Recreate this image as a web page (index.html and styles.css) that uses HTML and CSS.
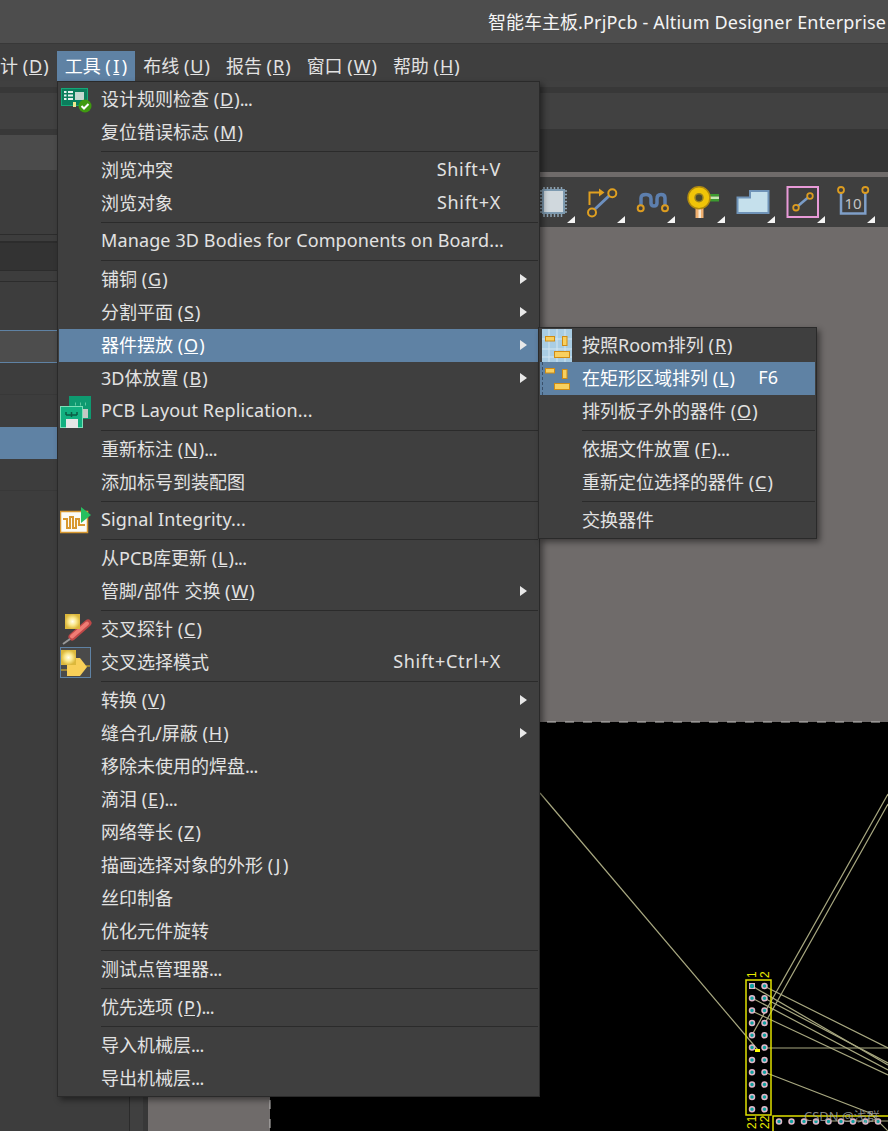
FILE: index.html
```html
<!DOCTYPE html>
<html lang="zh-CN">
<head>
  <meta charset="UTF-8">
  <title>智能车主板.PrjPcb - Altium Designer</title>
  <link rel="stylesheet" href="styles.css">
</head>
<body>
  <div class="app">
    <header class="titlebar">智能车主板<span class="lat-title">.PrjPcb - Altium Designer Enterprise</span></header>

    <nav class="menubar">
      <span class="menubar-item">设计 (<u>D</u>)</span>
      <span class="menubar-item active">工具 (<u class="wide">I</u>)</span>
      <span class="menubar-item">布线 (<u>U</u>)</span>
      <span class="menubar-item">报告 (<u>R</u>)</span>
      <span class="menubar-item">窗口 (<u>W</u>)</span>
      <span class="menubar-item">帮助 (<u>H</u>)</span>
    </nav>

    <!-- bandes sous le menu -->
    <div class="band band-a"></div>
    <div class="band band-b"></div>
    <div class="band band-c"></div>

    <div class="workspace">
      <aside class="panel">
        <div class="p-row p1"></div>
        <div class="p-row p2"></div>
        <div class="p-row p3"></div>
        <div class="p-row p4"></div>
        <div class="p-row p5"></div>
        <div class="p-row p6"></div>
        <div class="p-row p7"></div>
        <div class="p-row p8"></div>
        <div class="p-row p9"></div>
        <div class="p-row p10"></div>
        <div class="p-row p11"></div>
        <div class="p-row p12"></div>
      </aside>

      <main class="main">
        <div class="tabs"></div>
        <div class="gray-line"></div>
        <div class="toolbar">
          <div class="tool">
            <svg viewBox="0 0 36 36" width="36" height="36">
              <path d="M10 3v30M13.500 3v30M17 3v30M20.500 3v30M24 3v30M27.500 3v30M6 7h27M6 10.500h27M6 14h27M6 17.500h27M6 21h27M6 24.500h27M6 28h27" stroke="#8fa5b5" stroke-width="1.500" fill="none"/>
              <rect x="9" y="6" width="21" height="23" fill="#d0d8dd" stroke="#7d9ab0" stroke-width="2"/>
            </svg>
          </div>
          <div class="tool">
            <svg viewBox="0 0 36 36" width="36" height="36">
              <path d="M5.500 21V8.500H16" fill="none" stroke="#e0a020" stroke-width="2"/>
              <path d="M15 4.500l5.500 4-5.500 4z" fill="#e0a020"/>
              <path d="M10 26L26 11" stroke="#6d90c0" stroke-width="3"/>
              <circle cx="8" cy="28.500" r="4" fill="#3f3f3f" stroke="#e0a020" stroke-width="2"/>
              <circle cx="28.300" cy="9.300" r="4" fill="#3f3f3f" stroke="#e0a020" stroke-width="2"/>
            </svg>
          </div>
          <div class="tool">
            <svg viewBox="0 0 36 36" width="36" height="36">
              <path d="M7 21V14Q7 10.500 12 10.500Q17 10.500 17 15V19Q17 22 20 22Q23 22 23 19V15Q23 10.500 27 10.500Q31 10.500 31 14V21" fill="none" stroke="#5d7fae" stroke-width="3.500"/>
              <circle cx="6.700" cy="24.300" r="3" fill="#3f3f3f" stroke="#dc9c20" stroke-width="2"/>
              <circle cx="31" cy="24.300" r="3" fill="#3f3f3f" stroke="#dc9c20" stroke-width="2"/>
            </svg>
          </div>
          <div class="tool">
            <svg viewBox="0 0 36 36" width="36" height="36">
              <rect x="24" y="10" width="11" height="2.500" fill="#3c9a30"/>
              <rect x="24" y="12.500" width="11" height="2.500" fill="#c8e8b0"/>
              <rect x="24" y="15" width="11" height="2.500" fill="#3c9a30"/>
              <rect x="11.500" y="24" width="8" height="10" fill="#f0b070"/>
              <rect x="14.500" y="24" width="2.500" height="10" fill="#f6e6d0"/>
              <circle cx="15" cy="13.700" r="11" fill="#f0c408" stroke="#b08a10" stroke-width="1.500"/>
              <circle cx="15" cy="13.700" r="4" fill="#4a4a30" stroke="#9a8420" stroke-width="1.500"/>
            </svg>
          </div>
          <div class="tool">
            <svg viewBox="0 0 36 36" width="36" height="36">
              <path d="M3.500 13.500H16V7H34.500V29H3.500Z" fill="#c5e0ec" stroke="#6f93b8" stroke-width="2"/>
            </svg>
          </div>
          <div class="tool">
            <svg viewBox="0 0 36 36" width="36" height="36">
              <rect x="3.500" y="3" width="30.500" height="30" fill="none" stroke="#e89ad8" stroke-width="2"/>
              <path d="M14 22L24 13.500" stroke="#7a9cc8" stroke-width="2.500"/>
              <circle cx="12" cy="23.700" r="2.800" fill="#3f3f3f" stroke="#dc9c20" stroke-width="1.800"/>
              <circle cx="26" cy="12" r="2.800" fill="#3f3f3f" stroke="#dc9c20" stroke-width="1.800"/>
            </svg>
          </div>
          <div class="tool">
            <svg viewBox="0 0 36 36" width="36" height="36">
              <path d="M7 8V29.500H31.300V8" fill="none" stroke="#7f9fc8" stroke-width="2.500"/>
              <circle cx="7" cy="6" r="3" fill="#3f3f3f" stroke="#dc9c20" stroke-width="1.800"/>
              <circle cx="31.300" cy="6" r="3" fill="#3f3f3f" stroke="#dc9c20" stroke-width="1.800"/>
              <text x="19" y="25" class="dim-text">10</text>
            </svg>
          </div>
        </div>

        <div class="view">
          <div class="strip"></div>
          <svg class="pcb" viewBox="148 227 740 904" width="740" height="904">
            <rect x="148" y="227" width="740" height="904" fill="#6f6b6a"/>
            <rect x="270" y="722" width="618" height="409" fill="#000"/>
            <path d="M547 722H888" stroke="#c4c2c0" stroke-dasharray="9 9"/>
            <path d="M270 1100V1131" stroke="#c4c2c0" stroke-dasharray="9 10"/>
            <g class="nets">
              <path d="M540 793L758 1050"/>
              <path d="M752 1035L888 794"/>
              <path d="M765 1023L888 804"/>
              <path d="M752 986L888 1065"/>
              <path d="M764 986L888 1048"/>
              <path d="M752 998L888 1070"/>
              <path d="M764 998L888 1063"/>
              <path d="M752 1011L888 1075"/>
              <path d="M764 1048H888"/>
              <path d="M764 1072L870 1113L888 1131"/>
              <path d="M830 1121H888"/>
            </g>
            <rect x="746" y="980" width="25" height="135" class="outline"/>
            <path d="M773 1131V1116H888" class="outline"/>
            <rect x="755" y="1049" width="5" height="3" fill="#ff0"/>
            <g class="silk">
              <text transform="translate(756 978) rotate(-90)">1</text>
              <text transform="translate(769 978) rotate(-90)">2</text>
              <text transform="translate(756 1129) rotate(-90)">21</text>
              <text transform="translate(769 1129) rotate(-90)">22</text>
            </g>
            <rect x="749" y="983" width="6" height="6" fill="#e0b8c8"/>
            <circle cx="752" cy="986" r="2.200" class="hole"/>
            <g id="pads" class="pads">
              <circle cx="764.500" cy="986" r="2.500"/>
              <circle cx="752" cy="998.300" r="2.500"/><circle cx="764.500" cy="998.300" r="2.500"/>
              <circle cx="752" cy="1010.600" r="2.500"/><circle cx="764.500" cy="1010.600" r="2.500"/>
              <circle cx="752" cy="1023" r="2.500"/><circle cx="764.500" cy="1023" r="2.500"/>
              <circle cx="752" cy="1035.300" r="2.500"/><circle cx="764.500" cy="1035.300" r="2.500"/>
              <circle cx="752" cy="1047.600" r="2.500"/><circle cx="764.500" cy="1047.600" r="2.500"/>
              <circle cx="752" cy="1060" r="2.500"/><circle cx="764.500" cy="1060" r="2.500"/>
              <circle cx="752" cy="1072.300" r="2.500"/><circle cx="764.500" cy="1072.300" r="2.500"/>
              <circle cx="752" cy="1084.600" r="2.500"/><circle cx="764.500" cy="1084.600" r="2.500"/>
              <circle cx="752" cy="1097" r="2.500"/><circle cx="764.500" cy="1097" r="2.500"/>
              <circle cx="752" cy="1109.300" r="2.500"/><circle cx="764.500" cy="1109.300" r="2.500"/>
              <circle cx="779" cy="1121.500" r="2.500"/><circle cx="791.500" cy="1121.500" r="2.500"/>
              <circle cx="804" cy="1121.500" r="2.500"/><circle cx="816" cy="1121.500" r="2.500"/>
              <circle cx="828.500" cy="1121.500" r="2.500"/><circle cx="841" cy="1121.500" r="2.500"/>
              <circle cx="853" cy="1121.500" r="2.500"/><circle cx="865.500" cy="1121.500" r="2.500"/>
              <circle cx="878" cy="1121.500" r="2.500"/>
            </g>
            <text x="804" y="1121" class="watermark">CSDN @浅群</text>
          </svg>
        </div>
      </main>
    </div>

    <!-- menu Outils -->
    <div class="menu">
      <div class="item">
        <svg class="ico" viewBox="0 0 32 32" width="32" height="32">
          <defs>
            <radialGradient id="spark">
              <stop offset="0" stop-color="#fffef0"/>
              <stop offset="0.5" stop-color="#fbe88c"/>
              <stop offset="1" stop-color="#dcb83c"/>
            </radialGradient>
          </defs>
          <rect x="1.500" y="5.500" width="26" height="17" fill="#0b7d5c" stroke="#14a878"/>
          <path d="M4 9h2.500M8 9h5M4 12.500h2.500M8 12.500h5M4 16h2.500M8 16h5" stroke="#e6f2ee" stroke-width="2"/>
          <rect x="15" y="9" width="9" height="8" fill="#c4d8d0"/>
          <rect x="13" y="19" width="3" height="5" fill="#f0e890"/>
          <circle cx="25" cy="23" r="6.500" fill="#3f9a10"/>
          <path d="M21.500 23l2.500 2.500 4.500-4.500" fill="none" stroke="#fff" stroke-width="2"/>
        </svg>
        <span class="label">设计规则检查 (<u>D</u>)<span class="dots">...</span></span>
      </div>
      <div class="item"><span class="label">复位错误标志 (<u>M</u>)</span></div>
      <div class="sep"></div>
      <div class="item"><span class="label">浏览冲突</span><span class="key">Shift+V</span></div>
      <div class="item"><span class="label">浏览对象</span><span class="key">Shift+X</span></div>
      <div class="sep"></div>
      <div class="item"><span class="label lat">Manage 3D Bodies for Components on Board...</span></div>
      <div class="sep"></div>
      <div class="item has-sub"><span class="label">铺铜 (<u>G</u>)</span></div>
      <div class="item has-sub"><span class="label">分割平面 (<u>S</u>)</span></div>
      <div class="item has-sub current">
        <span class="label">器件摆放 (<u>O</u>)</span>
        <div class="submenu">
          <div class="item">
            <svg class="ico" viewBox="0 0 32 33" width="32" height="33">
              <rect x="1" y="0" width="30" height="33" fill="#a9cde4"/>
              <path d="M8 0v33M16 0v33M24 0v33M1 10h30M1 20h30M1 28h30" stroke="#d3e6f2"/>
              <rect x="4.500" y="7.500" width="9" height="4.500" class="bar"/>
              <rect x="21.500" y="7.500" width="4.500" height="9" class="bar"/>
              <rect x="13.500" y="22.500" width="15" height="6" class="bar"/>
            </svg>
            <span class="label">按照Room排列 (<u>R</u>)</span>
          </div>
          <div class="item current">
            <svg class="ico" viewBox="0 0 32 33" width="32" height="33">
              <path d="M1.500 0v33" stroke="#39506a" stroke-dasharray="3 2"/>
              <rect x="4.500" y="6.500" width="9" height="4.500" class="bar"/>
              <rect x="21.500" y="7.500" width="4.500" height="9" class="bar"/>
              <rect x="13.500" y="21.500" width="15" height="6" class="bar"/>
            </svg>
            <span class="label">在矩形区域排列 (<u>L</u>)</span><span class="key-plain">F6</span>
          </div>
          <div class="item"><span class="label">排列板子外的器件 (<u>O</u>)</span></div>
          <div class="sep"></div>
          <div class="item"><span class="label">依据文件放置 (<u>F</u>)<span class="dots">...</span></span></div>
          <div class="item"><span class="label">重新定位选择的器件 (<u>C</u>)</span></div>
          <div class="sep"></div>
          <div class="item"><span class="label">交换器件</span></div>
        </div>
      </div>
      <div class="item has-sub"><span class="label">3D体放置 (<u>B</u>)</span></div>
      <div class="item">
        <svg class="ico" viewBox="0 0 32 33" width="32" height="33">
          <rect x="9" y="1" width="22" height="23" fill="#0e9a70"/>
          <path d="M15 9h1M20 9h1M25 9h1" stroke="#5cc8a0" stroke-width="3"/>
          <rect x="23" y="14" width="5" height="9" fill="#c4c8c4"/>
          <rect x="0.500" y="11.500" width="22" height="21" fill="#12b080" stroke="#7ce0b8"/>
          <path d="M6 20v-3M11.500 22v-5M17 20v-3M6 20h11" stroke="#0a5c44" stroke-width="1.500" fill="none"/>
          <rect x="6" y="24" width="12" height="9" fill="#e6e6e6"/>
        </svg>
        <span class="label lat">PCB Layout Replication...</span>
      </div>
      <div class="sep"></div>
      <div class="item"><span class="label">重新标注 (<u>N</u>)<span class="dots">...</span></span></div>
      <div class="item"><span class="label">添加标号到装配图</span></div>
      <div class="sep"></div>
      <div class="item">
        <svg class="ico" viewBox="0 0 32 33" width="32" height="33">
          <rect x="0.500" y="7.500" width="27" height="21" fill="#fbfbf6" stroke="#d89830" stroke-width="1.500"/>
          <path d="M3 15h4v9h3V13h3v11h3V15h3v6h6" fill="none" stroke="#d89830" stroke-width="2"/>
          <path d="M21 3l10 8-10 8z" fill="#28c060"/>
        </svg>
        <span class="label lat">Signal Integrity...</span>
      </div>
      <div class="sep"></div>
      <div class="item"><span class="label">从PCB库更新 (<u>L</u>)<span class="dots">...</span></span></div>
      <div class="item has-sub"><span class="label">管脚/部件 交换 (<u>W</u>)</span></div>
      <div class="sep"></div>
      <div class="item">
        <svg class="ico" viewBox="0 0 32 33" width="32" height="33">
          <path d="M12 24L28 10" stroke="#c04848" stroke-width="7" stroke-linecap="round"/>
          <path d="M12 23.500L27 10.500" stroke="#f07c74" stroke-width="4" stroke-linecap="round"/>
          <path d="M10 26L3 31" stroke="#999" stroke-width="2"/>
          <rect x="5" y="1" width="15" height="15" fill="url(#spark)"/>
        </svg>
        <span class="label">交叉探针 (<u>C</u>)</span>
      </div>
      <div class="item">
        <svg class="ico" viewBox="0 0 32 33" width="32" height="33">
          <rect x="0.500" y="1.500" width="30" height="30" fill="#4a4a4a" stroke="#5f82a4"/>
          <path d="M1 24h6M26 20h4" stroke="#b89830" stroke-width="1.500"/>
          <path d="M7 12h13l7 9-7 9H7z" fill="#f8cf58"/>
          <rect x="1" y="4" width="15" height="15" fill="url(#spark)"/>
        </svg>
        <span class="label">交叉选择模式</span><span class="key">Shift+Ctrl+X</span>
      </div>
      <div class="sep"></div>
      <div class="item has-sub"><span class="label">转换 (<u>V</u>)</span></div>
      <div class="item has-sub"><span class="label">缝合孔/屏蔽 (<u>H</u>)</span></div>
      <div class="item"><span class="label">移除未使用的焊盘<span class="dots">...</span></span></div>
      <div class="item"><span class="label">滴泪 (<u>E</u>)<span class="dots">...</span></span></div>
      <div class="item"><span class="label">网络等长 (<u>Z</u>)</span></div>
      <div class="item"><span class="label">描画选择对象的外形 (<u class="wide">J</u>)</span></div>
      <div class="item"><span class="label">丝印制备</span></div>
      <div class="item"><span class="label">优化元件旋转</span></div>
      <div class="sep"></div>
      <div class="item"><span class="label">测试点管理器<span class="dots">...</span></span></div>
      <div class="sep"></div>
      <div class="item"><span class="label">优先选项 (<u>P</u>)<span class="dots">...</span></span></div>
      <div class="sep"></div>
      <div class="item"><span class="label">导入机械层<span class="dots">...</span></span></div>
      <div class="item"><span class="label">导出机械层<span class="dots">...</span></span></div>
    </div>
  </div>
</body>
</html>
```

FILE: styles.css
```css
* {
  margin: 0;
  padding: 0;
  box-sizing: border-box;
}

body {
  font-family: "Noto Sans", "Noto Sans CJK SC", sans-serif;
  font-size: 18px;
  color: #e2e2e2;
  background: #3f3f3f;
}

/* Mnémoniques et points de suite */
u { margin: 0 1px; }
u.wide { margin: 0 2.500px; }
.dots { letter-spacing: -0.600px; }
.lat { letter-spacing: 0.120px; }
.lat-title { letter-spacing: 0.180px; }

.app {
  position: relative;
  display: flex;
  flex-direction: column;
  width: 888px;
  height: 1131px;
  overflow: hidden;
}

/* Barre de titre */
.titlebar {
  height: 44px;
  padding-left: 488px;
  line-height: 45px;
  color: #f4f4f4;
  white-space: nowrap;
  background: #4d4d4d;
  border-bottom: 1px solid #383838;
}

/* Barre de menus */
.menubar {
  display: flex;
  height: 37px;
  padding-top: 7px;
  margin-left: -26px;
  flex-shrink: 0;
}

.menubar-item {
  height: 30px;
  padding: 0 8px;
  line-height: 30px;
  white-space: nowrap;
}

.menubar-item.active {
  background: #5f82a4;
  color: #fff;
}

.band { flex-shrink: 0; }
.band-a { height: 6px; background: #404040; }
.band-b { height: 6px; background: #383838; }
.band-c { height: 36px; background: #414141; }

.workspace {
  display: flex;
  flex: 1;
  min-height: 0;
}

/* Panneau gauche */
.panel {
  width: 130px;
  flex-shrink: 0;
  background: #3d3d3d;
  border-right: 1px solid #2b2b2b;
}

.p1 { height: 6px; background: #383838; }
.p2 { height: 35px; background: #4b4b4b; }
.p3 { height: 65px; border-bottom: 1px solid #2c2c2c; }
.p4 { height: 8px; border-bottom: 2px solid #2c2c2c; }
.p5 { height: 27px; background: #333; }
.p6 { height: 12px; border-top: 1px solid #2c2c2c; border-bottom: 1px solid #2c2c2c; }
.p7 { height: 48px; }
.p8 { height: 33px; background: #4d4d4d; border-top: 1px solid #5f82a4; border-bottom: 1px solid #5f82a4; }
.p9 { height: 32px; border-bottom: 1px solid #383838; }
.p10 { height: 32px; }
.p11 { height: 32px; background: #5f82a4; }
.p12 { height: 32px; border-bottom: 1px solid #383838; }

.main {
  display: flex;
  flex-direction: column;
  flex: 1;
  min-width: 0;
}

.tabs {
  height: 43px;
  flex-shrink: 0;
  background: #353535;
}

.gray-line {
  height: 5px;
  flex-shrink: 0;
  background: #6f6b6a;
}

/* Barre d'outils */
.toolbar {
  display: flex;
  height: 50px;
  padding-left: 400px;
  flex-shrink: 0;
  background: #3f3f3f;
}

.tool {
  position: relative;
  width: 50px;
  height: 50px;
  padding: 7px 0 0 4px;
  flex-shrink: 0;
}

.tool svg { display: block; }

.tool::after {
  content: "";
  position: absolute;
  right: 5px;
  bottom: 4px;
  width: 8px;
  height: 7px;
  background: #f4f4f4;
  clip-path: polygon(100% 0, 100% 100%, 0 100%);
}

.dim-text {
  font-size: 15px;
  fill: #c4c4c4;
  text-anchor: middle;
}

/* Zone de dessin */
.view {
  display: flex;
  flex: 1;
  min-height: 0;
}

.strip {
  width: 18px;
  flex-shrink: 0;
  background: #404040;
  border-right: 5px solid #383838;
}

.pcb { display: block; flex-shrink: 0; }

.nets path {
  fill: none;
  stroke: #a8a880;
  stroke-width: 1.200;
}

.outline {
  fill: none;
  stroke: #e0e000;
  stroke-width: 1.500;
}

.silk text {
  font-family: "Liberation Sans", sans-serif;
  font-size: 12px;
  fill: #e8e800;
}

.pads circle,
.hole {
  fill: #0fa0a0;
}

.pads circle {
  stroke: #e0b8c8;
  stroke-width: 1.500;
}

.watermark {
  font-size: 13px;
  fill: #a8a8a8;
  fill-opacity: 0.8;
}

/* Menu déroulant */
.menu {
  position: absolute;
  left: 57px;
  top: 81px;
  width: 483px;
  height: 1016px;
  padding: 1px 1px 0;
  background: #3f3f3f;
  border: 1px solid #2a2a2a;
  box-shadow: 3px 3px 6px rgba(0, 0, 0, 0.45);
}

.item {
  position: relative;
  display: flex;
  align-items: center;
  height: 33px;
  padding: 0 37px 3px 42px;
  white-space: nowrap;
}

.item.current {
  background: #5f82a4;
  color: #fff;
}

.label { flex: 1; }
.key { letter-spacing: 0.700px; }

.ico {
  position: absolute;
  left: 1px;
  top: 0;
}

.bar {
  fill: #f8d060;
  stroke: #d08c14;
}

.has-sub::after {
  content: "";
  position: absolute;
  right: 11px;
  top: 11px;
  border-left: 7px solid #e8e8e8;
  border-top: 5px solid transparent;
  border-bottom: 5px solid transparent;
}

.sep {
  height: 1px;
  margin: 2px 0 2px 42px;
  background: #2b2b2b;
}

/* Sous-menu */
.submenu {
  position: absolute;
  left: 479px;
  top: -2px;
  width: 279px;
  height: 212px;
  padding: 1px 1px 0;
  color: #e2e2e2;
  background: #3f3f3f;
  border: 1px solid #2a2a2a;
  box-shadow: 3px 3px 6px rgba(0, 0, 0, 0.45);
}
```
